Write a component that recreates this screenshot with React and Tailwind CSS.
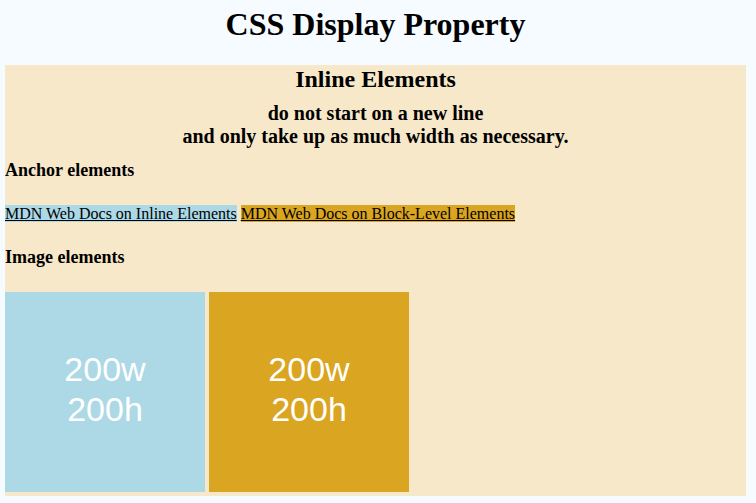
import React from 'react';

const serif = { fontFamily: '"Liberation Serif", "Times New Roman", serif' };

function Placeholder({ color }) {
  return (
    <div
      className={`w-[200px] h-[200px] shrink-0 flex flex-col items-center justify-center text-white text-[34px] leading-[40px] pb-[6px] ${color}`}
      style={{ fontFamily: '"Liberation Sans", Arial, sans-serif' }}
    >
      <span>200w</span>
      <span>200h</span>
    </div>
  );
}

export default function App() {
  return (
    <div className="min-h-[503px] bg-[#f6fbff] pl-[5px] pr-[10px] pt-[6px] text-black" style={serif}>
      <h1 className="text-center text-[32px] leading-[37px] font-bold">CSS Display Property</h1>

      <section className="mt-[22px] bg-[#f7e8c9] pb-[4px]">
        <h2 className="text-center text-[24px] leading-[28px] font-bold">Inline Elements</h2>
        <h3 className="mt-[9px] text-center text-[20px] leading-[23px] font-bold">
          do not start on a new line
          <br />
          and only take up as much width as necessary.
        </h3>

        <h4 className="mt-[12px] text-[18px] leading-[21px] font-bold">Anchor elements</h4>
        <p className="mt-[24px] text-[16px] leading-[18px]">
          <a href="#" className="bg-[#add8e6] underline text-black">MDN Web Docs on Inline Elements</a>{' '}
          <a href="#" className="bg-[#daa520] underline text-black">MDN Web Docs on Block-Level Elements</a>
        </p>

        <h4 className="mt-[24px] text-[18px] leading-[21px] font-bold">Image elements</h4>
        <div className="mt-[24px] flex gap-[4px]">
          <Placeholder color="bg-[#add8e6]" />
          <Placeholder color="bg-[#daa520]" />
        </div>
      </section>
    </div>
  );
}
